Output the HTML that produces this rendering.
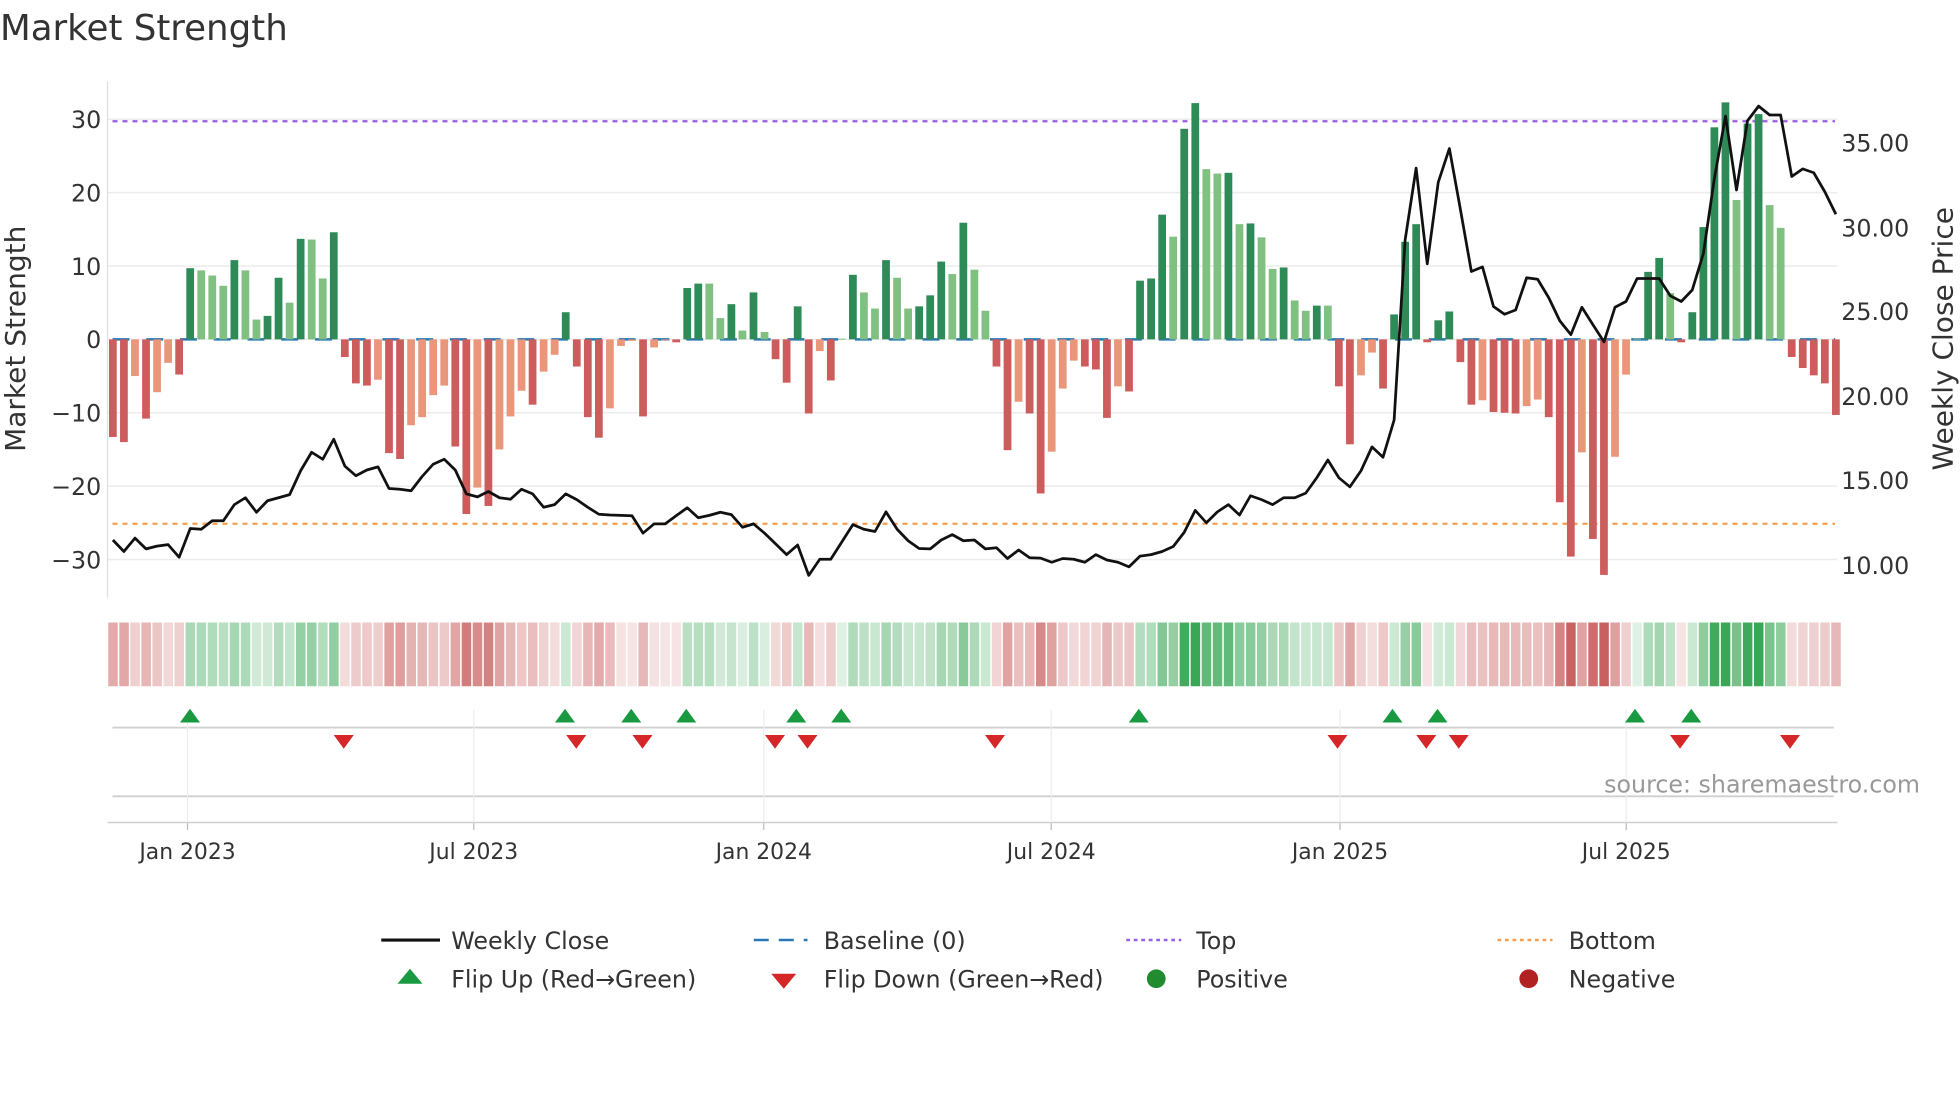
<!DOCTYPE html>
<html><head><meta charset="utf-8"><style>
html,body{margin:0;padding:0;background:#fff;}
svg{display:block;font-family:"DejaVu Sans","Liberation Sans",sans-serif;}
</style></head><body>
<svg id="c" width="1960" height="1102" viewBox="0 0 1568 881.6" xmlns="http://www.w3.org/2000/svg">
<rect width="1568" height="881.6" fill="#fff"/>
<text x="0" y="32" font-size="28.5" fill="#333">Market Strength</text>
<g id="grid"></g>
<g id="bars"></g>
<g id="strip"></g>
<g id="marks"></g>
<text x="20" y="271" font-size="22.4" fill="#333" text-anchor="middle" transform="rotate(-90 20 271)">Market Strength</text>
<text x="1562" y="271" font-size="22.4" fill="#333" text-anchor="middle" transform="rotate(-90 1562 271)">Weekly Close Price</text>
<text x="1536" y="634" font-size="19" fill="#999" text-anchor="end">source: sharemaestro.com</text>
<g font-size="19" fill="#333">
<line x1="305" y1="752" x2="352" y2="752" stroke="#111" stroke-width="2.5"/>
<text x="361" y="759">Weekly Close</text>
<line x1="603" y1="752" x2="646" y2="752" stroke="#2a78b4" stroke-width="2" stroke-dasharray="12,8"/>
<text x="659" y="759">Baseline (0)</text>
<line x1="901" y1="752" x2="945" y2="752" stroke="#9b5de5" stroke-width="2" stroke-dasharray="3,3"/>
<text x="957" y="759">Top</text>
<line x1="1198" y1="752" x2="1242" y2="752" stroke="#f0a050" stroke-width="2" stroke-dasharray="3,3"/>
<text x="1255" y="759">Bottom</text>
<polygon points="318,787 338,787 328,775" fill="#1a9a40"/>
<text x="361" y="790">Flip Up (Red→Green)</text>
<polygon points="617,779 637,779 627,791" fill="#d62728"/>
<text x="659" y="790">Flip Down (Green→Red)</text>
<circle cx="925" cy="783" r="7.5" fill="#228b30"/>
<text x="957" y="790">Positive</text>
<circle cx="1223" cy="783" r="7.5" fill="#b22222"/>
<text x="1255" y="790">Negative</text>
</g>
</svg>
<script>
var NS="http://www.w3.org/2000/svg";
function el(p,t,a,txt){var e=document.createElementNS(NS,t);for(var k in a)e.setAttribute(k,a[k]);if(txt!==undefined)e.textContent=txt;p.appendChild(e);return e;}
var g=document.getElementById('grid'),b=document.getElementById('bars'),s=document.getElementById('strip'),m=document.getElementById('marks');
var V=[[-13.3,1],[-14,1],[-5,0],[-10.8,1],[-7.2,0],[-3.2,0],[-4.8,1],[9.7,1],[9.4,0],[8.7,0],[7.3,0],[10.8,1],[9.4,0],[2.7,0],[3.2,1],[8.4,1],[5,0],[13.7,1],[13.6,0],[8.3,0],[14.6,1],
[-2.4,1],[-6,1],[-6.3,1],[-5.5,0],[-15.5,1],[-16.3,1],[-11.7,0],[-10.6,0],[-7.6,0],[-6.3,0],[-14.6,1],[-23.8,1],[-20.2,0],[-22.7,1],[-15,0],[-10.5,0],[-7,0],[-8.9,1],
[-4.4,0],[-2.1,0],[3.7,1],[-3.7,1],[-10.6,1],[-13.4,1],[-9.4,0],[-0.9,0],[-0.2,0],[-10.5,1],[-1.1,0],[-0.1,0],[-0.4,1],
[7,1],[7.6,1],[7.6,0],[2.9,0],[4.8,1],[1.2,0],[6.4,1],[1,0],[-2.7,1],[-5.9,1],[4.5,1],[-10.1,1],[-1.6,0],[-5.6,1],[0.1,0],
[8.8,1],[6.4,0],[4.2,0],[10.8,1],[8.4,0],[4.2,0],[4.5,1],[6,1],[10.6,1],[8.9,0],[15.9,1],[9.5,0],[3.9,0],
[-3.7,1],[-15.1,1],[-8.5,0],[-10.1,1],[-21,1],[-15.3,0],[-6.7,0],[-2.9,0],[-3.7,1],[-4.1,1],[-10.7,1],[-6.4,0],[-7.1,1],
[8,1],[8.3,1],[17,1],[14,0],[28.7,1],[32.2,1],[23.2,0],[22.6,0],[22.7,1],[15.7,0],[15.8,1],[13.9,0],[9.6,0],[9.8,1],[5.3,0],[3.9,0],[4.6,1],[4.6,0],
[-6.4,1],[-14.3,1],[-4.9,0],[-1.8,0],[-6.7,1],[3.4,1],[13.3,1],[15.7,1],[-0.4,1],[2.6,1],[3.8,1],
[-3.1,1],[-8.9,1],[-8.3,0],[-9.9,1],[-10,1],[-10.1,1],[-9.1,0],[-8.2,0],[-10.6,1],[-22.2,1],[-29.6,1],[-15.4,0],[-27.2,1],[-32.1,1],[-16,0],[-4.8,0],[0.1,0],
[9.2,1],[11.1,1],[6.3,0],[-0.4,1],[3.7,1],[15.3,1],[28.9,1],[32.3,1],[19,0],[29.4,1],[30.7,1],[18.3,0],[15.2,0],
[-2.4,1],[-3.9,1],[-4.9,1],[-6,1],[-10.3,1]];
var P=[1170,1200,1165,1193,1186,1182,1215,1140,1142,1120,1120,1078,1060,1098,1068,1060,1052,990,942,960,908,978,1003,988,980,1036,1038,1042,1005,973,960,988,1050,1058,1044,1060,1064,1038,1050,1085,1078,1050,1065,1085,1103,1105,1106,1107,1152,1128,1128,1107,1086,1112,1106,1098,1104,1137,1128,1152,1180,1208,1183,1262,1220,1220,1175,1130,1142,1148,1097,1142,1172,1192,1193,1170,1156,1172,1170,1193,1190,1218,1196,1216,1217,1228,1218,1220,1228,1208,1222,1228,1240,1212,1208,1200,1187,1150,1093,1125,1097,1078,1105,1055,1065,1078,1060,1060,1048,1008,962,1008,1032,990,928,955,858,390,203,452,240,152,310,472,460,563,583,572,488,492,540,600,636,565,610,655,565,550,490,490,490,535,550,520,425,230,68,260,80,42,65,65,225,205,215,265,323];
var Z=271.5,U=5.87,X0=87.2,PI=8.836;
[30,20,10,0,-10,-20,-30].forEach(function(v){var y=Z-v*U;el(g,'line',{x1:86,x2:1470,y1:y,y2:y,stroke:'#ececec','stroke-width':1.2});
el(g,'text',{x:81,y:y+7,'font-size':19,fill:'#333','text-anchor':'end'},(v<0?'\u2212':'')+Math.abs(v));});
[[35,114],[30,182],[25,249],[20,317],[15,384],[10,452]].forEach(function(a){el(g,'text',{x:1473,y:a[1]+7,'font-size':19,fill:'#333'},a[0].toFixed(2));});
el(g,'line',{x1:86,x2:86,y1:65,y2:478,stroke:'#e0e0e0','stroke-width':1});
el(g,'line',{x1:90,x2:1468,y1:Z,y2:Z,stroke:'#2a78b4','stroke-width':2,'stroke-dasharray':'13.5,13.5'});
el(g,'line',{x1:90,x2:1468,y1:97,y2:97,stroke:'#9b5de5','stroke-width':1.8,'stroke-dasharray':'4,4'});
el(g,'line',{x1:90,x2:1468,y1:419,y2:419,stroke:'#f0a050','stroke-width':1.8,'stroke-dasharray':'4,4'});
function mix(c,a){return 'rgb('+c.map(function(x){return Math.round(255-(255-x)*a);}).join(',')+')';}
V.forEach(function(d,i){var v=d[0],x=X0+i*PI,h=Math.abs(v)*U,col;
 if(v>=0)col=d[1]?'#2e8a57':'#80c080';else col=d[1]?'#cd5c5c':'#e9967a';
 el(b,'rect',{x:x,y:v>=0?Z-h:Z,width:6.2,height:Math.max(h,0.8),fill:col});
 var a=Math.min(1,0.16+Math.abs(v)/36);
 el(s,'rect',{x:x-0.6,y:498,width:7.6,height:51,fill:v>=0?mix([58,167,87],a):mix([200,96,95],a)});
});
var pts=P.map(function(zy,i){return (X0+3.1+i*PI).toFixed(1)+','+(72+zy/3.25).toFixed(1);}).join(' ');
el(b,'polyline',{points:pts,fill:'none',stroke:'#111','stroke-width':2.2,'stroke-linejoin':'round'});
el(m,'line',{x1:90,x2:1467,y1:582,y2:582,stroke:'#d0d0d0','stroke-width':1.5});
el(m,'line',{x1:90,x2:1467,y1:637,y2:637,stroke:'#d0d0d0','stroke-width':1.5});
el(m,'line',{x1:86,x2:1470,y1:658,y2:658,stroke:'#cfcfcf','stroke-width':1.2});
[[150,'Jan 2023'],[379,'Jul 2023'],[611,'Jan 2024'],[841,'Jul 2024'],[1072,'Jan 2025'],[1301,'Jul 2025']].forEach(function(t){
 el(m,'line',{x1:t[0],x2:t[0],y1:568,y2:658,stroke:'#eeeeee','stroke-width':1});
 el(m,'line',{x1:t[0],x2:t[0],y1:658,y2:664,stroke:'#bbb','stroke-width':1});
 el(m,'text',{x:t[0],y:687,'font-size':17.5,fill:'#333','text-anchor':'middle'},t[1]);});
[152,452,505,549,637,673,911,1114,1150,1308,1353].forEach(function(x){el(m,'polygon',{points:(x-8)+',578 '+(x+8)+',578 '+x+',567',fill:'#1a9a40'});});
[275,461,514,620,646,796,1070,1141,1167,1344,1432].forEach(function(x){el(m,'polygon',{points:(x-8)+',588 '+(x+8)+',588 '+x+',599',fill:'#d62728'});});
</script>
</body></html>
